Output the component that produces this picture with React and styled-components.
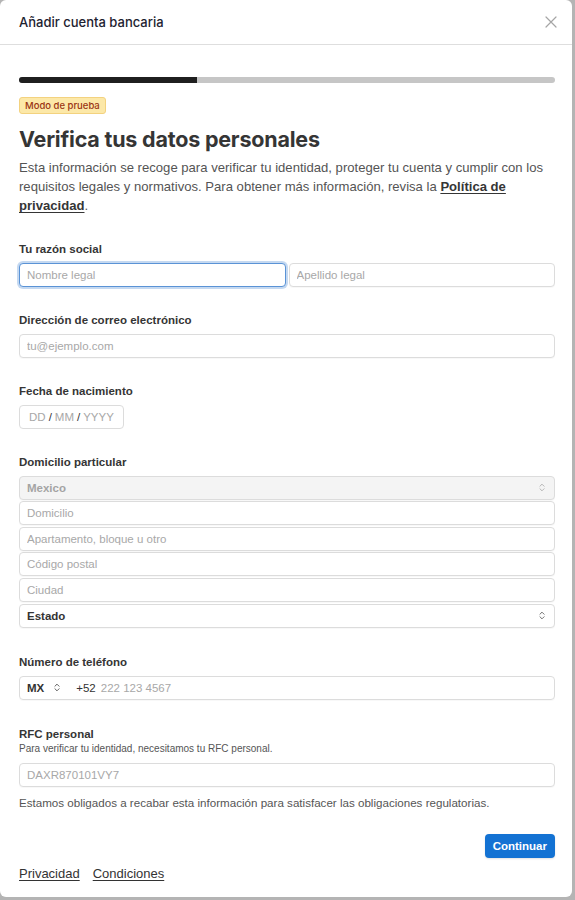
import React from "react";
import styled, { createGlobalStyle } from "styled-components";

const Global = createGlobalStyle`
  html, body { margin: 0; padding: 0; background: #b4b4b4; }
  body { font-family: Inter, "Noto Sans", sans-serif; -webkit-font-smoothing: antialiased; }
  * { box-sizing: border-box; }
`;

const Modal = styled.div`
  width: 572px;
  height: 897px;
  background: #fff;
  border-radius: 6px;
  display: flex;
  flex-direction: column;
  overflow: hidden;
`;

const Header = styled.div`
  height: 45px;
  flex: none;
  display: flex;
  align-items: center;
  justify-content: space-between;
  padding: 0 15px 1px 19px;
  border-bottom: 1px solid #dedede;
`;

const Title = styled.h1`
  margin: 0;
  font-family: Inter, sans-serif;
  font-size: 13px;
  font-weight: 500;
  color: #1d2230;
`;

const Close = styled.button`
  border: 0;
  background: none;
  padding: 0;
  width: 12px;
  height: 12px;
  display: flex;
  align-items: center;
  justify-content: center;
  color: #a5a5a5;
`;

const Body = styled.div`
  flex: 1;
  display: flex;
  flex-direction: column;
  padding: 32px 17px 0 19px;
  font-family: "Liberation Sans", Arial, sans-serif;
`;

const Progress = styled.div`
  height: 6px;
  border-radius: 3px;
  background: #c6c6c6;
  overflow: hidden;
  display: flex;
`;

const ProgressFill = styled.div`
  background: #1f1f1f;
  height: 100%;
`;

const Badge = styled.span`
  align-self: flex-start;
  margin-top: 14px;
  background: #fce8a8;
  border: 1px solid #f3d27f;
  color: #9a3412;
  font-size: 9.5px;
  line-height: 15px;
  padding: 0 5px;
  border-radius: 3px;
  font-family: Inter, sans-serif;
  font-weight: 500;
`;

const Heading = styled.h2`
  margin: 11px 0 0;
  font-family: Inter, sans-serif;
  font-weight: 700;
  font-size: 21.5px;
  letter-spacing: -0.2px;
  color: #353535;
  line-height: 28px;
`;

const Lead = styled.p`
  margin: 5px 0 0;
  font-size: 13.1px;
  line-height: 19.2px;
  color: #545454;
  a { color: #353535; font-weight: 700; text-decoration: underline; text-underline-offset: 2px; }
`;

const Section = styled.div`
  display: flex;
  flex-direction: column;
  margin-top: ${(p) => p.$mt || 26}px;
`;

const Label = styled.label`
  font-size: 11.5px;
  font-weight: 700;
  color: #353535;
  line-height: 14px;
  margin-bottom: ${(p) => (p.$tight ? 2 : 7)}px;
`;

const Hint = styled.div`
  font-size: 10px;
  color: #555;
  line-height: 12px;
  margin-bottom: 8px;
`;

const Row = styled.div`
  display: grid;
  grid-template-columns: 1fr 1fr;
  gap: 3px;
`;

const Stack = styled.div`
  display: flex;
  flex-direction: column;
  gap: 1.6px;
`;

const Input = styled.input`
  display: block;
  width: 100%;
  min-width: 0;
  height: 24px;
  border: 1px solid ${(p) => (p.$focus ? "#5a93d6" : "#dcdcdc")};
  box-shadow: ${(p) =>
    p.$focus ? "0 0 0 2px rgba(90,147,214,0.35)" : "0 1px 1px rgba(0,0,0,0.03)"};
  border-radius: 4px;
  padding: 0 7px;
  font-family: "Liberation Sans", Arial, sans-serif;
  font-size: 11.5px;
  color: #333;
  outline: none;
  &::placeholder { color: #a8a8a8; }
`;

const SelectBox = styled.div`
  height: 24px;
  border: 1px solid #dcdcdc;
  border-radius: 4px;
  background: ${(p) => (p.$disabled ? "#f4f4f4" : "#fff")};
  display: flex;
  align-items: center;
  justify-content: space-between;
  padding: 0 7px;
  font-size: 11.5px;
  font-weight: 700;
  color: ${(p) => (p.$disabled ? "#a4a4a4" : "#333")};
  box-shadow: 0 1px 1px rgba(0,0,0,0.03);
`;

const UpDown = ({ color = "#9a9a9a" }) => (
  <svg width="10" height="11" viewBox="0 0 24 24" fill="none" stroke={color} strokeWidth="2.2" strokeLinecap="round" strokeLinejoin="round">
    <path d="m7 15 5 5 5-5" />
    <path d="m7 9 5-5 5 5" />
  </svg>
);

const DateBox = styled.div`
  width: 105px;
  height: 24px;
  border: 1px solid #dcdcdc;
  border-radius: 4px;
  display: flex;
  align-items: center;
  gap: 3px;
  padding: 0 9px;
  font-size: 11.5px;
  color: #a8a8a8;
`;

const Slash = styled.span`
  color: #333;
`;

const PhoneBox = styled.div`
  height: 24px;
  border: 1px solid #dcdcdc;
  border-radius: 4px;
  display: flex;
  align-items: center;
  padding: 0 7px;
  font-size: 11.5px;
  box-shadow: 0 1px 1px rgba(0,0,0,0.03);
`;

const Country = styled.span`
  font-weight: 700;
  color: #333;
  display: flex;
  align-items: center;
  gap: 8px;
  margin-right: 14px;
`;

const Prefix = styled.span`
  color: #333;
  margin-right: 5px;
`;

const PhonePlaceholder = styled.span`
  color: #a8a8a8;
`;

const Note = styled.p`
  margin: 9px 0 0;
  font-size: 11.6px;
  color: #555;
  line-height: 14px;
`;

const Actions = styled.div`
  display: flex;
  justify-content: flex-end;
  margin-top: 24px;
`;

const Primary = styled.button`
  height: 24px;
  padding: 0 8px;
  border: 0;
  border-radius: 4px;
  background: #1372d3;
  color: #fff;
  font-family: "Liberation Sans", Arial, sans-serif;
  font-weight: 700;
  font-size: 11.5px;
  box-shadow: 0 1px 2px rgba(0,0,0,0.12);
`;

const Footer = styled.div`
  display: flex;
  gap: 13px;
  margin-top: 8px;
  a {
    font-size: 13px;
    line-height: 16px;
    color: #333;
    text-decoration: underline;
    text-underline-offset: 2px;
  }
`;

export default function App() {
  return (
    <>
      <Global />
      <Modal>
        <Header>
          <Title>Añadir cuenta bancaria</Title>
          <Close aria-label="Cerrar">
            <svg width="12" height="12" viewBox="0 0 12 12" stroke="currentColor" strokeWidth="1.2" strokeLinecap="round">
              <path d="M1 1 11 11M11 1 1 11" />
            </svg>
          </Close>
        </Header>
        <Body>
          <Progress>
            <ProgressFill style={{ width: "33.3%" }} />
          </Progress>
          <Badge>Modo de prueba</Badge>
          <Heading>Verifica tus datos personales</Heading>
          <Lead>
            Esta información se recoge para verificar tu identidad, proteger tu cuenta y cumplir con los
            requisitos legales y normativos. Para obtener más información, revisa la{" "}
            <a href="#">Política de privacidad</a>.
          </Lead>

          <Section $mt={26}>
            <Label>Tu razón social</Label>
            <Row>
              <Input $focus placeholder="Nombre legal" />
              <Input placeholder="Apellido legal" />
            </Row>
          </Section>

          <Section>
            <Label>Dirección de correo electrónico</Label>
            <Input placeholder="tu@ejemplo.com" />
          </Section>

          <Section>
            <Label>Fecha de nacimiento</Label>
            <DateBox>
              DD <Slash>/</Slash> MM <Slash>/</Slash> YYYY
            </DateBox>
          </Section>

          <Section>
            <Label>Domicilio particular</Label>
            <Stack>
              <SelectBox $disabled>
                Mexico <UpDown color="#b0b0b0" />
              </SelectBox>
              <Input placeholder="Domicilio" />
              <Input placeholder="Apartamento, bloque u otro" />
              <Input placeholder="Código postal" />
              <Input placeholder="Ciudad" />
              <SelectBox>
                Estado <UpDown color="#666" />
              </SelectBox>
            </Stack>
          </Section>

          <Section $mt={27}>
            <Label>Número de teléfono</Label>
            <PhoneBox>
              <Country>
                MX <UpDown color="#555" />
              </Country>
              <Prefix>+52</Prefix>
              <PhonePlaceholder>222 123 4567</PhonePlaceholder>
            </PhoneBox>
          </Section>

          <Section $mt={27}>
            <Label $tight>RFC personal</Label>
            <Hint>Para verificar tu identidad, necesitamos tu RFC personal.</Hint>
            <Input placeholder="DAXR870101VY7" />
          </Section>

          <Note>Estamos obligados a recabar esta información para satisfacer las obligaciones regulatorias.</Note>

          <Actions>
            <Primary>Continuar</Primary>
          </Actions>

          <Footer>
            <a href="#">Privacidad</a>
            <a href="#">Condiciones</a>
          </Footer>
        </Body>
      </Modal>
    </>
  );
}
